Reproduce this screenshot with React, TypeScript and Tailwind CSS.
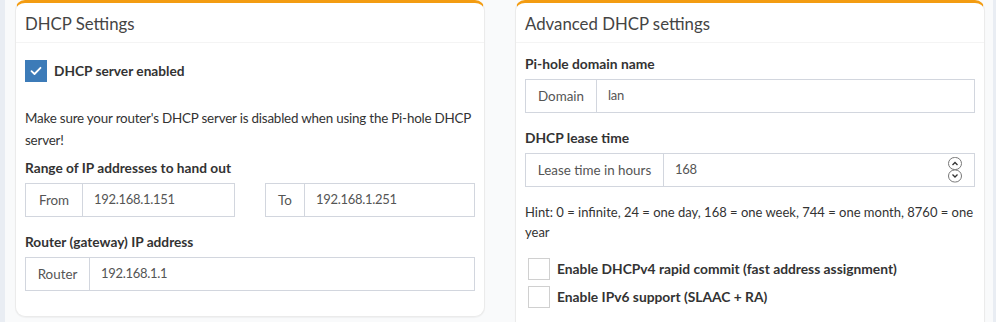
import React from "react";

const font = { fontFamily: "Lato, 'Noto Sans', sans-serif" };

function Addon({ label, value, addonW }: { label: string; value: string; addonW: string }) {
  return (
    <div className="flex h-[34px] border border-[#d2d6de] bg-white text-[#555]">
      <div className={`flex items-center justify-center border-r border-[#d2d6de] text-[13.4px] ${addonW}`}>{label}</div>
      <div className="flex flex-1 items-center pl-[11px] text-[13px] tracking-[-0.3px]">{value}</div>
    </div>
  );
}

function Card({ title, children, cut }: { title: string; children: React.ReactNode; cut?: boolean }) {
  return (
    <div
      className={`flex w-[470px] flex-col rounded-[10px] border border-[#ebebeb] border-t-[3px] border-t-[#f39c12] bg-white shadow-[0_1px_1px_rgba(0,0,0,0.04)] ${
        cut ? "h-[340px]" : "h-[317px]"
      }`}
    >
      <div className="flex h-[40px] items-center border-b border-[#f4f4f4] px-[9px] pt-[2px] text-[16.8px] text-[#444]">{title}</div>
      <div className="px-[9px] pt-[11px]">{children}</div>
    </div>
  );
}

export default function App() {
  return (
    <div className="flex h-[322px] w-[996px] overflow-hidden bg-[#f9fafb] text-[#333]" style={font}>
      <div className="w-[5px] shrink-0 bg-[#e9edf3]" />
      <div className="flex gap-[30px] pl-[10px]">
        <Card title="DHCP Settings">
          <div className="mt-[6px] flex h-[22px] items-center gap-[7px]">
            <div className="flex h-[22px] w-[22px] items-center justify-center bg-[#3c7bb8]">
              <svg width="12" height="10" viewBox="0 0 12 10" fill="none">
                <path d="M1.5 5.2 L4.5 8 L10.5 1.8" stroke="white" strokeWidth="1.8" strokeLinecap="round" strokeLinejoin="round" />
              </svg>
            </div>
            <span className="text-[13.7px] font-bold text-[#333]">DHCP server enabled</span>
          </div>
          <p className="mt-[25px] text-[13.4px] leading-[22px] tracking-[-0.2px] text-[#333]">
            Make sure your router's DHCP server is disabled when using the Pi-hole DHCP server!
          </p>
          <div className="mt-[7px] text-[13.7px] font-bold leading-[20px]">Range of IP addresses to hand out</div>
          <div className="mt-[5px] grid grid-cols-2 gap-[30px]">
            <Addon label="From" value="192.168.1.151" addonW="w-[57px]" />
            <Addon label="To" value="192.168.1.251" addonW="w-[39px]" />
          </div>
          <div className="mt-[15px] text-[13.7px] font-bold leading-[20px]">Router (gateway) IP address</div>
          <div className="mt-[5px]">
            <Addon label="Router" value="192.168.1.1" addonW="w-[64px]" />
          </div>
        </Card>
        <Card title="Advanced DHCP settings" cut>
          <div className="text-[13.8px] font-bold leading-[20px]">Pi-hole domain name</div>
          <div className="mt-[5px]">
            <Addon label="Domain" value="lan" addonW="w-[71px]" />
          </div>
          <div className="mt-[15px] text-[13.8px] font-bold leading-[20px]">DHCP lease time</div>
          <div className="relative mt-[5px]">
            <Addon label="Lease time in hours" value="168" addonW="w-[138px]" />
            <svg className="absolute right-[13px] top-[4px]" width="14" height="26" viewBox="0 0 14 26" fill="none">
              <rect x="0.5" y="0.5" width="13" height="12" rx="6" stroke="#777" />
              <rect x="0.5" y="13" width="13" height="12" rx="6" stroke="#777" />
              <path d="M4.5 8 L7 5.5 L9.5 8" stroke="#333" strokeWidth="1.3" />
              <path d="M4.5 17.5 L7 20 L9.5 17.5" stroke="#333" strokeWidth="1.3" />
            </svg>
          </div>
          <p className="mt-[15px] text-[13px] leading-[20px] text-[#333]">
            Hint: 0 = infinite, 24 = one day, 168 = one week, 744 = one month, 8760 = one year
          </p>
          <div className="mt-[16px] flex flex-col gap-[6px] pl-[3px]">
            <div className="flex h-[22px] items-center gap-[7px]">
              <div className="h-[22px] w-[22px] border border-[#d0d0d0] bg-white" />
              <span className="text-[13.8px] font-bold">Enable DHCPv4 rapid commit (fast address assignment)</span>
            </div>
            <div className="flex h-[22px] items-center gap-[7px]">
              <div className="h-[22px] w-[22px] border border-[#d0d0d0] bg-white" />
              <span className="text-[13.8px] font-bold">Enable IPv6 support (SLAAC + RA)</span>
            </div>
          </div>
        </Card>
      </div>
      <div className="ml-auto w-[3px] shrink-0 bg-[#e9edf3]" />
    </div>
  );
}
